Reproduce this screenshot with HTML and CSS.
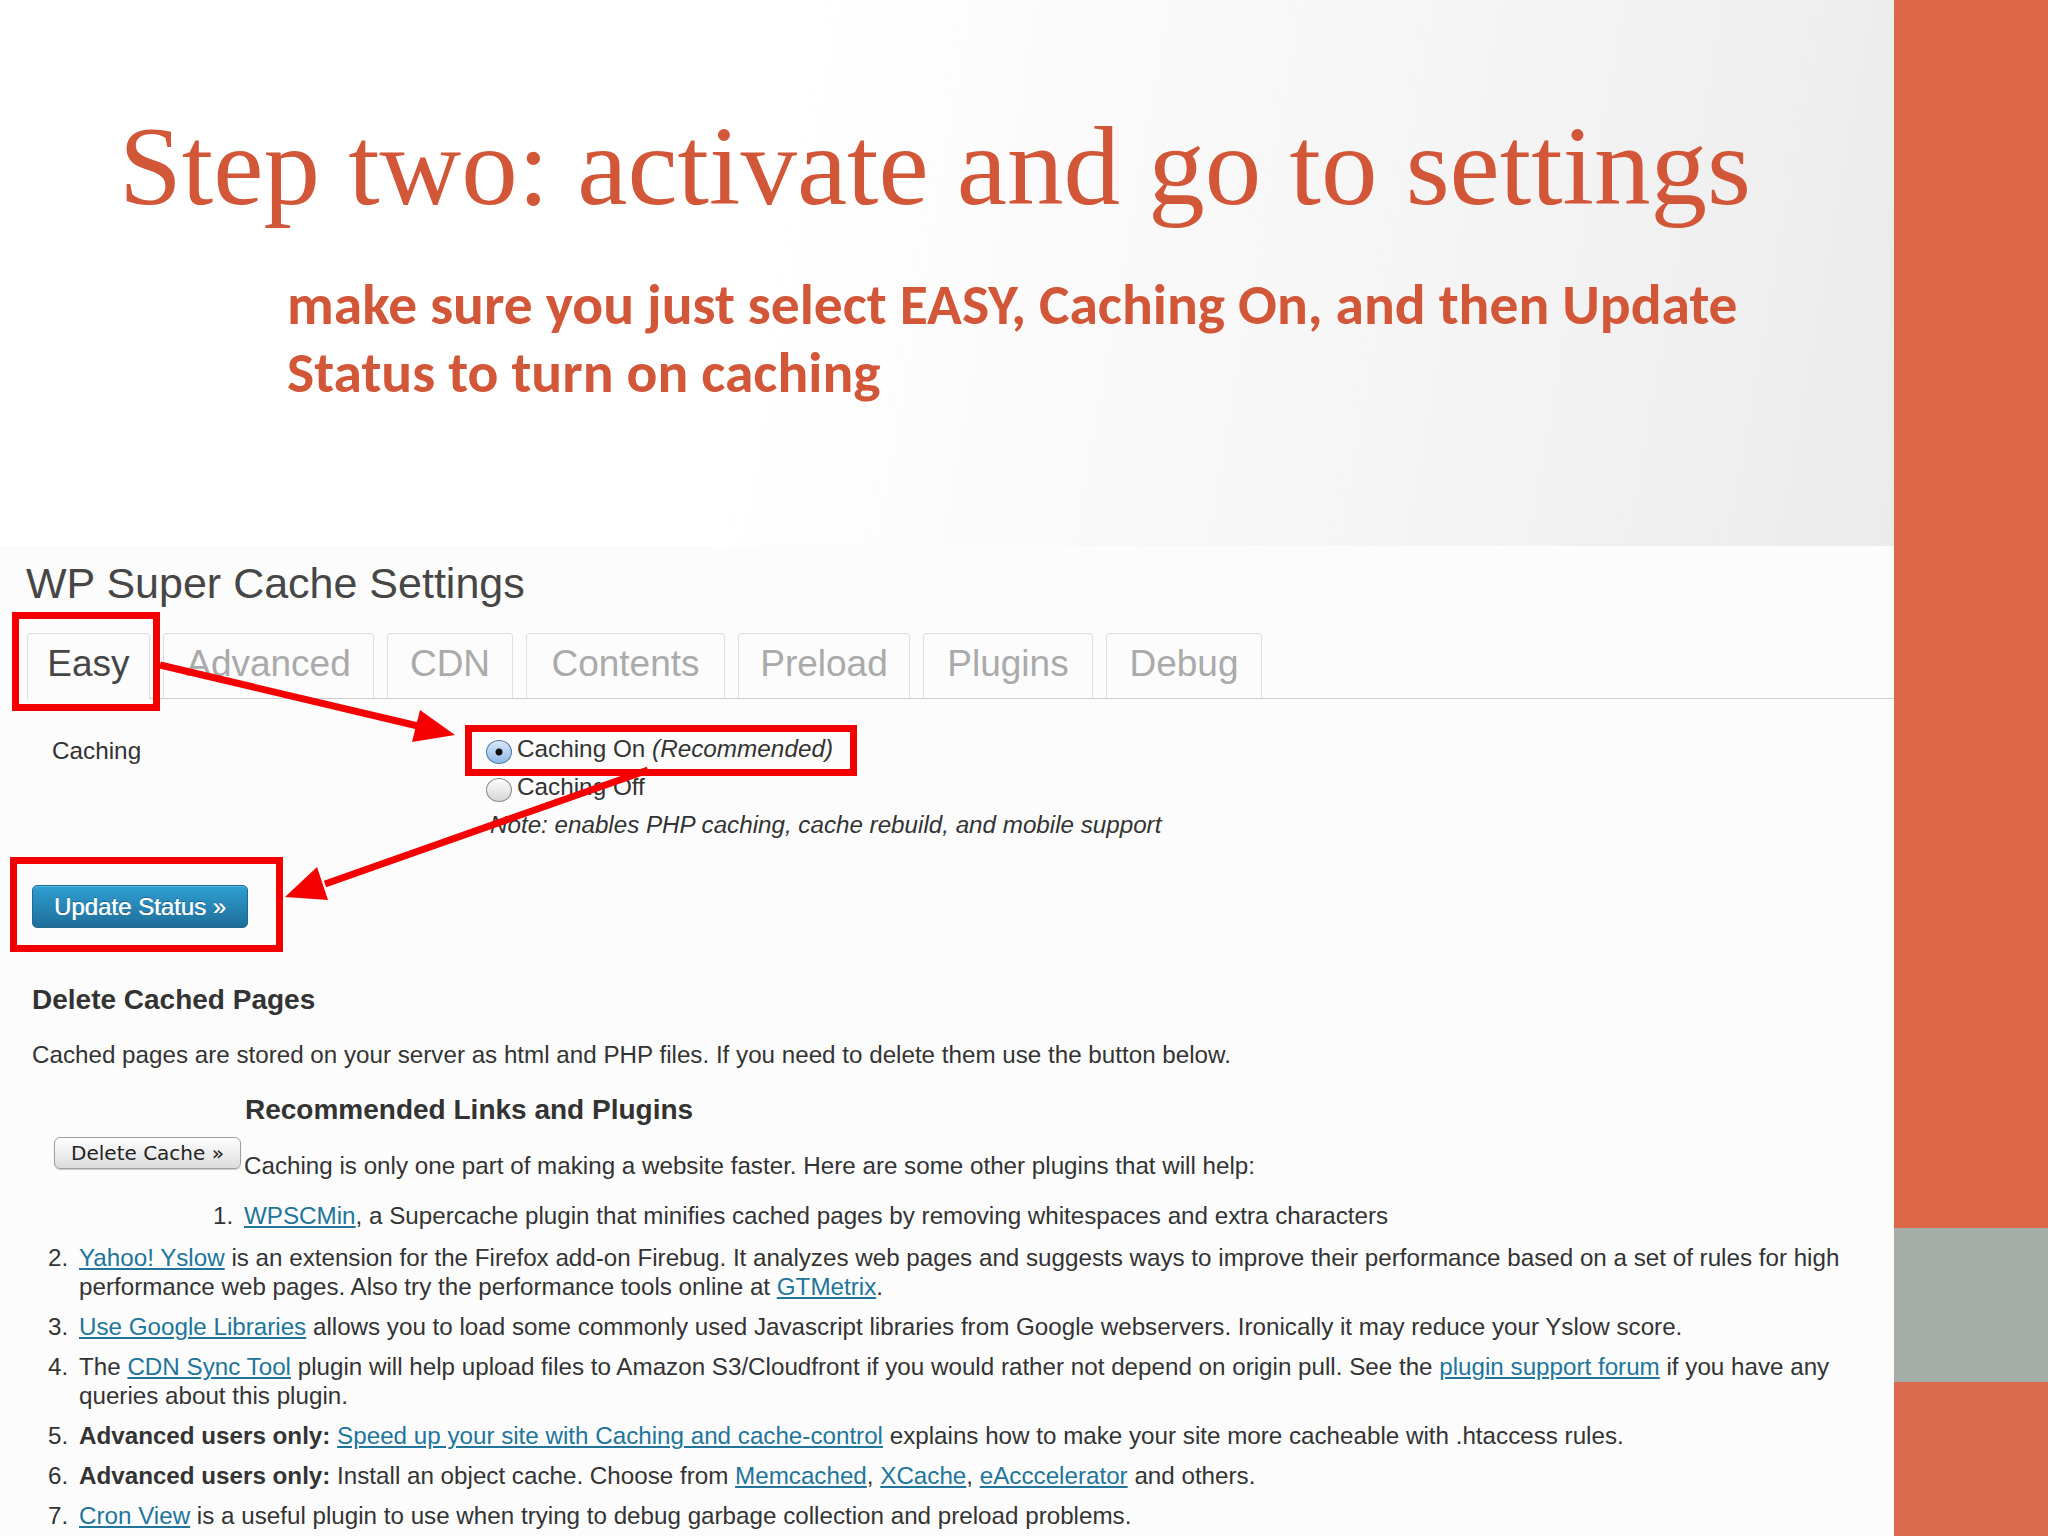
FILE: index.html
```html
<!DOCTYPE html>
<html lang="en">
<head>
  <meta charset="UTF-8" />
  <title>Step two: activate and go to settings</title>
  <link rel="stylesheet" href="styles.css">
</head>
<body>
  <div class="slide">
    <div class="main">
      <div class="slide-head">
        <h1>Step two: activate and go to settings</h1>
        <p class="lead">make sure you just select EASY, Caching On, and then Update<br>Status to turn on caching</p>
      </div>

      <div class="shot">
        <h2>WP Super Cache Settings</h2>

        <div class="tabs">
          <span class="tab active">Easy</span>
          <span class="tab">Advanced</span>
          <span class="tab">CDN</span>
          <span class="tab">Contents</span>
          <span class="tab">Preload</span>
          <span class="tab">Plugins</span>
          <span class="tab">Debug</span>
        </div>

        <div class="field">
          <div class="field-label">Caching</div>
          <div class="field-options">
            <label class="opt"><input type="radio" name="caching" checked>Caching On <em>(Recommended)</em></label>
            <label class="opt"><input type="radio" name="caching">Caching Off</label>
            <p class="note">Note: enables PHP caching, cache rebuild, and mobile support</p>
          </div>
        </div>

        <button class="btn-primary">Update Status &raquo;</button>

        <h3>Delete Cached Pages</h3>
        <p class="desc">Cached pages are stored on your server as html and PHP files. If you need to delete them use the button below.</p>

        <h3 class="recs-title">Recommended Links and Plugins</h3>
        <div class="recs-intro">
          <button class="btn-delete">Delete Cache &raquo;</button>
          <p>Caching is only one part of making a website faster. Here are some other plugins that will help:</p>
        </div>

        <ol class="recs">
          <li class="first"><span class="rec-text"><a href="#">WPSCMin</a>, a Supercache plugin that minifies cached pages by removing whitespaces and extra characters</span></li>
          <li><span class="rec-text"><a href="#">Yahoo! Yslow</a> is an extension for the Firefox add-on Firebug. It analyzes web pages and suggests ways to improve their performance based on a set of rules for high<br>performance web pages. Also try the performance tools online at <a href="#">GTMetrix</a>.</span></li>
          <li><span class="rec-text"><a href="#">Use Google Libraries</a> allows you to load some commonly used Javascript libraries from Google webservers. Ironically it may reduce your Yslow score.</span></li>
          <li><span class="rec-text">The <a href="#">CDN Sync Tool</a> plugin will help upload files to Amazon S3/Cloudfront if you would rather not depend on origin pull. See the <a href="#">plugin support forum</a> if you have any<br>queries about this plugin.</span></li>
          <li><span class="rec-text"><b>Advanced users only:</b> <a href="#">Speed up your site with Caching and cache-control</a> explains how to make your site more cacheable with .htaccess rules.</span></li>
          <li><span class="rec-text"><b>Advanced users only:</b> Install an object cache. Choose from <a href="#">Memcached</a>, <a href="#">XCache</a>, <a href="#">eAcccelerator</a> and others.</span></li>
          <li><span class="rec-text"><a href="#">Cron View</a> is a useful plugin to use when trying to debug garbage collection and preload problems.</span></li>
        </ol>

        <!-- red callouts drawn over the screenshot -->
        <div class="callout callout-easy"></div>
        <div class="callout callout-on"></div>
        <div class="callout callout-update"></div>
        <svg class="arrows" width="1894" height="990" viewBox="0 0 1894 990">
          <line x1="160" y1="119" x2="418" y2="180" />
          <polygon points="455,189 412,196 420,164" />
          <line x1="648" y1="224" x2="325" y2="338" />
          <polygon points="285,351 328,354 317,321" />
        </svg>
      </div>
    </div>

    <div class="side">
      <div class="side-top"></div>
      <div class="side-mid"></div>
      <div class="side-bottom"></div>
    </div>
  </div>
</body>
</html>
```

FILE: styles.css
```css
html, body { margin: 0; }
body { width: 2048px; height: 1536px; overflow: hidden; font-family: "Liberation Sans", Arial, sans-serif; }

.slide { display: flex; height: 1536px; }
.main { width: 1894px; display: flex; flex-direction: column; }

.slide-head { flex: none; height: 546px; box-sizing: border-box; padding-top: 109px;
              background: linear-gradient(100deg, #ffffff 40%, #f3f3f3 80%, #ebebeb 100%); }
h1 { margin: 0 0 0 119px; font: normal 113px/113px "Liberation Serif", serif; color: #d25638; white-space: nowrap; }
.lead { margin: 48px 0 0 287px; font: bold 57.5px/68px "Carlito", "Lato", sans-serif; color: #d25638; white-space: nowrap; }

.shot { flex: 1; min-height: 0; overflow: hidden; position: relative; background: #fcfcfc;
        padding: 0 20px 0 32px; color: #333; }
h2 { margin: 13px 0 0 -6px; font: normal 43px/48px "Liberation Sans", Arial, sans-serif; color: #464646; }

.tabs { display: flex; gap: 13px; margin: 26px -20px 0 -5px; border-bottom: 1px solid #ccc; }
.tab { box-sizing: border-box; text-align: center; border: 1px solid #dfdfdf; border-bottom: 0;
       border-radius: 4px 4px 0 0; padding: 8px 0 12px; font-size: 37px; line-height: 44px;
       color: #aaa; background: #fcfcfc; }
.tab.active { color: #464646; margin-bottom: -1px; padding-bottom: 13px; }
.tab:nth-child(1) { width: 123px; }
.tab:nth-child(2) { width: 211px; }
.tab:nth-child(3) { width: 126px; }
.tab:nth-child(4) { width: 199px; }
.tab:nth-child(5) { width: 172px; }
.tab:nth-child(6) { width: 170px; }
.tab:nth-child(7) { width: 156px; }

.field { display: flex; margin-top: 31px; }
.field-label { width: 434px; padding: 2px 0 0 20px; font-size: 24.3px; line-height: 38px; }
.opt { display: block; font-size: 24.3px; line-height: 38px; }
.opt input { appearance: none; -webkit-appearance: none; width: 26px; height: 24px; margin: 0 5px 0 0;
             vertical-align: -7px; border: 1px solid #8a8a8a; border-radius: 50%; box-sizing: border-box;
             background: linear-gradient(#fdfdfd, #d6d6d6); }
.opt input:checked { border-color: #4f79a8;
                     background: radial-gradient(circle, #111 0 3px, transparent 4px), linear-gradient(#d9e9fa, #8fb8e4); }
.note { margin: 0 0 0 4px; font-size: 24.2px; line-height: 38px; font-style: italic; }

.btn-primary { display: block; margin-top: 41px; width: 216px; height: 43px; padding: 0;
               border: 1px solid #1e6a91; border-radius: 5px; background: linear-gradient(#2e9fd3, #1f6e99);
               color: #fff; font: 24px "Liberation Sans", Arial, sans-serif;
               text-shadow: 0 -1px 0 rgba(0,0,0,0.3), 0.4px 0 0 #fff;
               box-shadow: inset 0 1px 0 rgba(140,210,240,0.5); }

h3 { margin: 55px 0 0; font: bold 28px/34px "Liberation Sans", Arial, sans-serif; color: #333; }
.desc { margin: 23px 0 0; font-size: 24.2px; line-height: 29px; }
h3.recs-title { margin: 24px 0 0 213px; }

.recs-intro { display: flex; align-items: flex-start; margin: 10px 0 0 22px; }
.btn-delete { width: 187px; height: 32px; padding: 0; border: 1px solid #a0a0a0; border-radius: 6px;
              background: linear-gradient(#ffffff, #dcdcdc); box-shadow: 0 1px 1px rgba(0,0,0,0.2);
              font: 20px "DejaVu Sans", sans-serif; color: #222; }
.recs-intro p { margin: 14px 0 0 3px; font-size: 24.2px; line-height: 29px; }

.recs { margin: 21px 0 0 16px; padding: 0; list-style: none; counter-reset: rec; }
.recs li { display: flex; font-size: 24.2px; line-height: 29px; margin-bottom: 11px; }
.recs li::before { content: counter(rec) "."; counter-increment: rec; width: 31px; flex: none; }
.recs li.first { margin-left: 165px; margin-bottom: 13px; }
.rec-text { white-space: nowrap; }
.recs a { color: #21759b; text-decoration: underline; }

.callout { position: absolute; border: 7px solid #f50000; box-sizing: border-box; }
.callout-easy { left: 12px; top: 66px; width: 148px; height: 99px; }
.callout-on { left: 465px; top: 179px; width: 392px; height: 51px; }
.callout-update { left: 10px; top: 311px; width: 273px; height: 95px; }
.arrows { position: absolute; left: 0; top: 0; pointer-events: none; }
.arrows line { stroke: #f50000; stroke-width: 7; }
.arrows polygon { fill: #f50000; }

.side { width: 154px; display: flex; flex-direction: column; }
.side-top { height: 1228px; background: #dd6749; }
.side-mid { height: 154px; background: #a4ada6; }
.side-bottom { flex: 1; background: #dc6a4c; }
```
